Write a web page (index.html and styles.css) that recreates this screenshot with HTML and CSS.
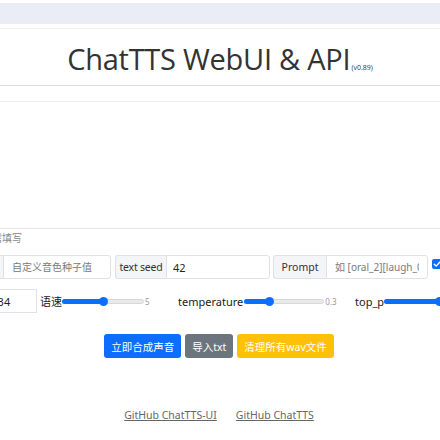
FILE: index.html
```html
<!DOCTYPE html>
<html lang="zh">
<head>
<meta charset="utf-8">
<title>ChatTTS WebUI & API</title>
<link rel="stylesheet" href="styles.css">
</head>
<body>
<div class="page">
  <div class="topbar"></div>
  <header class="header">
    <h1 class="title">ChatTTS WebUI &amp; API<small class="ver">(v0.89)</small></h1>
  </header>
  <div class="editor"></div>
  <div class="hint">需填写</div>

  <div class="row row-inputs">
    <div class="group g1">
      <span class="addon addon-cut">音色值</span>
      <input class="field f1" type="text" placeholder="自定义音色种子值">
    </div>
    <div class="group g2">
      <span class="addon a2">text seed</span>
      <input class="field f2" type="text" value="42">
    </div>
    <div class="group g3">
      <span class="addon a3">Prompt</span>
      <input class="field f3" type="text" placeholder="如 [oral_2][laugh_0][break_6]">
    </div>
    <span class="check">
      <svg width="10" height="10" viewBox="0 0 10 10"><path d="M2.2 5.2 L4.2 7.1 L7.9 3" fill="none" stroke="#fff" stroke-width="1.4" stroke-linecap="round" stroke-linejoin="round"/></svg>
    </span>
  </div>

  <div class="row row-sliders">
    <div class="sgroup sa">
      <input class="field fnum" type="text" value="2234">
      <span class="slabel">语速</span>
      <div class="track t1"><div class="fill" style="width:50%"></div><span class="thumb" style="left:50%"></span></div>
      <span class="sval">5</span>
    </div>
    <div class="sgroup sb">
      <span class="slabel">temperature</span>
      <div class="track t2"><div class="fill" style="width:31%"></div><span class="thumb" style="left:31%"></span></div>
      <span class="sval">0.3</span>
    </div>
    <div class="sgroup sc">
      <span class="slabel">top_p</span>
      <div class="track t3"><div class="fill" style="width:68%"></div><span class="thumb" style="left:68%"></span></div>
      <span class="sval">0.7</span>
    </div>
  </div>

  <div class="buttons">
    <button class="btn btn-primary">立即合成声音</button>
    <button class="btn btn-secondary">导入txt</button>
    <button class="btn btn-warning">清理所有wav文件</button>
  </div>

  <div class="links">
    <a href="#">GitHub ChatTTS-UI</a>
    <a href="#">GitHub ChatTTS</a>
  </div>
</div>
</body>
</html>
```
FILE: styles.css
```css
* { box-sizing: border-box; }
html, body { margin: 0; padding: 0; background: #fff; }
body {
  font-family: "Noto Sans", "Noto Sans CJK SC", sans-serif;
  font-size: 11px;
  color: #212529;
}
.page {
  width: 440px;
  height: 440px;
  overflow: hidden;
}
.topbar {
  margin-top: 3px;
  height: 21px;
  background: #eaedf6;
}
.header {
  margin-top: 4px;
  height: 58px;
  border-top: 1px solid #f0f0f0;
  border-bottom: 1px solid #dcdcdc;
  display: flex;
  justify-content: center;
}
.title {
  margin: 0;
  padding-top: 12px;
  font-family: "Open Sans", "Noto Sans", sans-serif;
  font-weight: 400;
  font-size: 29px;
  line-height: 36px;
  color: #333;
  letter-spacing: -0.25px;
}
.ver {
  font-size: 7px;
  letter-spacing: 0;
  margin-left: 1px;
}
.editor {
  margin-top: 15px;
  height: 128px;
  border-top: 1px solid #ececec;
  border-bottom: 1px solid #e6e6e6;
}
.hint {
  margin-left: -8px;
  margin-top: 2px;
  height: 14px;
  line-height: 14px;
  font-size: 10px;
  color: #888;
}
.row {
  display: flex;
  align-items: center;
  height: 24px;
}
.row-inputs {
  margin-top: 10px;
  gap: 4px;
}
.group {
  display: flex;
  height: 24px;
  flex: none;
}
.addon {
  display: flex;
  align-items: center;
  padding: 0 5px;
  background: #f4f5f6;
  border: 1px solid #dee2e6;
  border-right: none;
  border-radius: 3px 0 0 3px;
  color: #333;
  font-size: 10.5px;
  white-space: nowrap;
}
.addon-cut {
  width: 60px;
  margin-left: -57px;
  color: transparent;
}
.a2 { width: 51px; justify-content: center; letter-spacing: -0.2px; }
.a3 { width: 53px; justify-content: center; }
.field {
  height: 24px;
  border: 1px solid #dee2e6;
  border-radius: 0 3px 3px 0;
  padding: 0 8px;
  font-family: inherit;
  font-size: 10px;
  color: #212529;
  background: #fff;
  outline: none;
  margin: 0;
}
.field::placeholder { color: #7a7a7a; }
.f1 { width: 108px; }
.f2 { width: 104px; font-size: 11px; padding-left: 6px; }
.f3 { width: 102px; }
.g3 { margin-left: -1px; }
.check {
  flex: none;
  width: 10px;
  height: 10px;
  border-radius: 2px;
  background: #0d6efd;
  display: flex;
  align-items: center;
  justify-content: center;
  margin-top: -6px;
}
.check svg { display: block; }

.row-sliders {
  margin-top: 10px;
}
.sgroup {
  display: flex;
  align-items: center;
  height: 24px;
  flex: none;
}
.sa { width: 201px; margin-left: -23px; }
.sb { width: 177px; }
.sc { width: 200px; }
.fnum {
  width: 60px;
  border-radius: 0;
  font-size: 11px;
  padding: 0 6px 0 7px;
}
.slabel {
  font-size: 11px;
  color: #222;
  white-space: nowrap;
}
.sa .slabel { margin-left: 3px; }
.track {
  position: relative;
  height: 5px;
  background: #e9e9e9;
  border: 1px solid #d8d8d8;
  border-radius: 3px;
  flex: none;
}
.t1 { width: 82px; }
.t2 { width: 80px; margin-left: 1px; }
.t3 { width: 82px; }
.fill {
  position: absolute;
  left: -1px;
  top: -1px;
  height: 5px;
  background: #0d6efd;
  border-radius: 3px;
}
.thumb {
  position: absolute;
  top: 50%;
  width: 9px;
  height: 9px;
  margin: -4.5px 0 0 -4.5px;
  border-radius: 50%;
  background: #0d6efd;
}
.sval {
  font-size: 8px;
  color: #999;
  margin-left: 1px;
}

.buttons {
  margin-top: 21px;
  display: flex;
  justify-content: center;
  gap: 4px;
  padding-right: 2px;
}
.btn {
  height: 24px;
  border: none;
  border-radius: 3px;
  color: #fff;
  font-family: inherit;
  font-size: 10.5px;
  padding: 0 7px;
  margin: 0;
  white-space: nowrap;
  flex: none;
}
.btn-primary { background: #0d6efd; }
.btn-secondary { background: #6c757d; }
.btn-warning { background: #ffc107; }

.links {
  margin-top: 50px;
  display: flex;
  justify-content: center;
  gap: 19px;
  padding-right: 2px;
  font-size: 10.5px;
  line-height: 14px;
}
.links a {
  color: #666;
  text-decoration: underline;
}
```
